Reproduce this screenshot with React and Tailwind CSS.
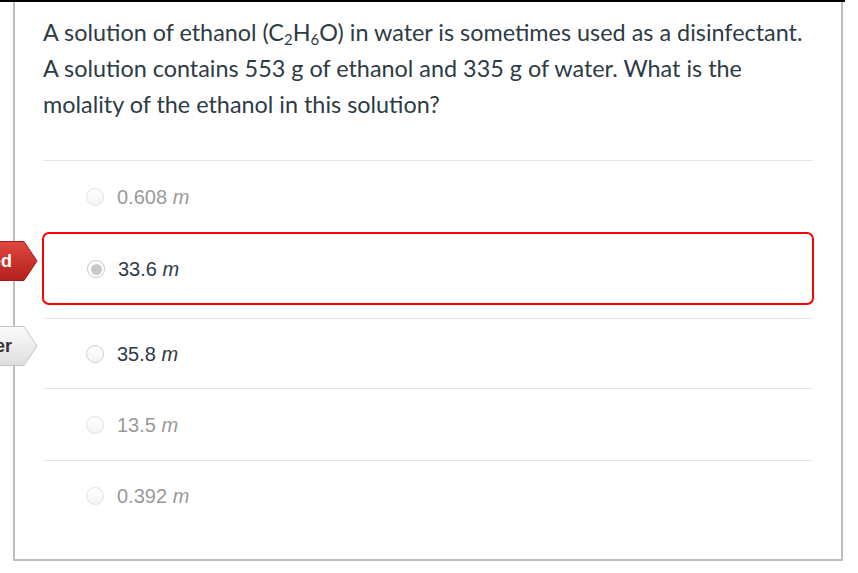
import React from "react";

const options = [
  { value: "0.608", state: "muted" },
  { value: "33.6", state: "selected" },
  { value: "35.8", state: "normal" },
  { value: "13.5", state: "muted" },
  { value: "0.392", state: "muted" },
];

function Radio({ state }) {
  if (state === "selected") {
    return (
      <span className="w-[18px] h-[18px] rounded-full border border-[#c8c8c8] bg-white flex items-center justify-center shrink-0">
        <span className="w-[11px] h-[11px] rounded-full bg-[#c9c9c9]" />
      </span>
    );
  }
  return (
    <span
      className={`w-[18px] h-[18px] rounded-full border shrink-0 bg-gradient-to-b from-white to-[#f4f4f4] ${
        state === "muted" ? "border-[#e3e3e3]" : "border-[#cfcfcf]"
      }`}
    />
  );
}

function Option({ value, state }) {
  const text = state === "muted" ? "text-[#9a9a9a]" : "text-[#2d3b45]";
  return (
    <div className="flex items-center gap-[13px] pl-[43px] pt-[1px] h-full">
      <Radio state={state} />
      <span className={`font-['Liberation_Sans',Arial,sans-serif] text-[20px] ${text}`}>
        {value} <i>m</i>
      </span>
    </div>
  );
}

function Badge({ top, label, tone }) {
  const red = tone === "red";
  return (
    <div className="absolute left-0 w-[38px] h-[40px]" style={{ top }}>
      <svg width="38" height="40" viewBox="0 0 38 40" className="absolute inset-0">
        <defs>
          <linearGradient id={`g-${tone}`} x1="0" y1="0" x2="0" y2="1">
            <stop offset="0" stopColor={red ? "#e0463f" : "#fbfbfb"} />
            <stop offset="1" stopColor={red ? "#b3201c" : "#dedede"} />
          </linearGradient>
        </defs>
        <polygon
          points="-2,0.5 24,0.5 37,20 24,39.5 -2,39.5"
          fill={`url(#g-${tone})`}
          stroke={red ? "#a51b17" : "#c4c4c4"}
          strokeWidth="1"
        />
      </svg>
      <span
        className={`absolute right-[26px] top-[9px] whitespace-nowrap font-['Liberation_Sans',Arial,sans-serif] text-[18px] font-bold leading-[22px] ${
          red ? "text-white" : "text-[#333]"
        }`}
      >
        {label}
      </span>
    </div>
  );
}

export default function App() {
  return (
    <div className="relative w-[858px] h-[573px] bg-white overflow-hidden">
      <div className="border-t-2 border-black w-[845px]">
        <div className="ml-[13px] w-[830px] h-[559px] border-l-2 border-r-2 border-b-2 border-[#bdbdbd] px-[28px] pt-[12px]">
          {/* Question */}
          <p className="font-['Lato',sans-serif] text-[23.4px] leading-[36px] text-[#2d3b45]">
            A solution of ethanol (C<sub className="text-[15px]">2</sub>H
            <sub className="text-[15px]">6</sub>O) in water is sometimes used as a disinfectant.
            <br />
            A solution contains 553 g of ethanol and 335 g of water. What is the
            <br />
            molality of the ethanol in this solution?
          </p>

          {/* Answers */}
          <div className="mt-[38px] border-t border-[#e6e6e6]">
            <div className="h-[71px]">
              <Option {...options[0]} />
            </div>
            <div className="h-[73px] border-2 border-[#ff0000] rounded-[7px] -mx-[1px]">
              <Option {...options[1]} />
            </div>
            <div className="mt-[13px] border-t border-[#e6e6e6] h-[70px]">
              <Option {...options[2]} />
            </div>
            <div className="border-t border-[#e6e6e6] h-[72px]">
              <Option {...options[3]} />
            </div>
            <div className="border-t border-[#e6e6e6] h-[70px]">
              <Option {...options[4]} />
            </div>
          </div>
        </div>
      </div>

      <Badge top="241px" label="Answered" tone="red" />
      <Badge top="326px" label="Correct Answer" tone="gray" />
    </div>
  );
}
